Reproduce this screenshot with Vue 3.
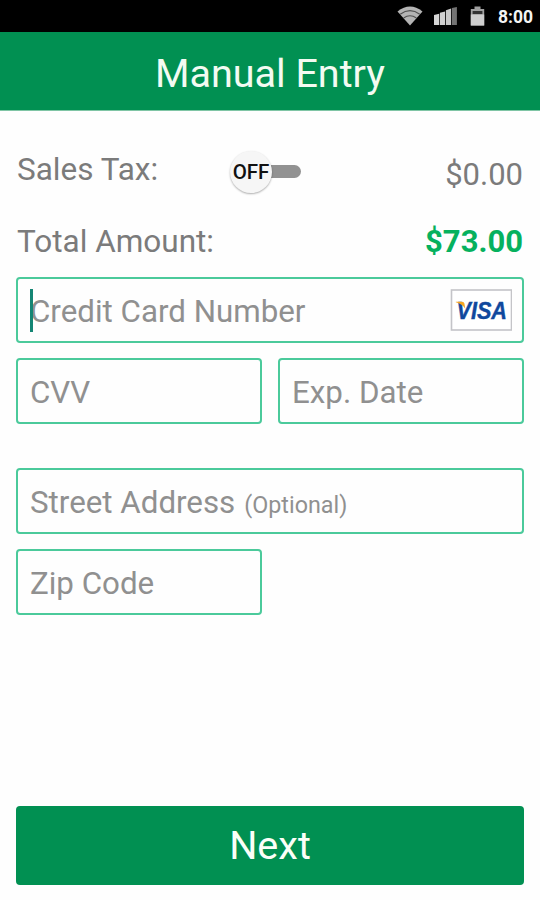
<script setup>
import { ref } from 'vue'

const time = '8:00'
const salesTax = ref('$0.00')
const total = ref('$73.00')
</script>

<template>
  <div class="screen">
    <div class="status">
      <svg class="wifi" width="26" height="20" viewBox="0 0 26 20">
        <path d="M0.5 5.5 Q13 -4.5 25.5 5.5 L13 19.5 Z" fill="#b4b4b4" />
        <path d="M3.2 8.2 Q13 1 22.8 8.2 M6.6 12 Q13 7.4 19.4 12" fill="none" stroke="#505050" stroke-width="1.1" />
      </svg>
      <svg class="signal" width="23" height="18" viewBox="0 0 23 18">
        <path d="M0 8l5.200-1.200V18H0z" fill="#d6d6d6" />
        <path d="M5.900 5.700l5.200-1.200V18H5.900z" fill="#d0d0d0" />
        <path d="M11.900 3.200l5.200-1.600V18h-5.200z" fill="#c8c8c8" />
        <path d="M17.900 1L22.900 0V18h-5z" fill="#737373" />
      </svg>
      <svg class="battery" width="15" height="20" viewBox="0 0 15 20">
        <path d="M4.500 0.500h6v2.500h3.700v16.500H0.800V3h3.700z" fill="#a0a0a0" />
        <rect x="2.6" y="5" width="9.800" height="3.200" fill="#333" />
        <rect x="0.800" y="8.500" width="13.400" height="11" fill="#cecece" />
      </svg>
      <span class="clock">{{ time }}</span>
    </div>

    <header class="title"><span>Manual Entry</span></header>

    <main class="form">
      <div class="row tax">
        <span class="label">Sales Tax:</span>
        <div class="switch">
          <div class="knob"><span>OFF</span></div>
          <div class="track"></div>
        </div>
        <span class="amount">{{ salesTax }}</span>
      </div>
      <div class="row total">
        <span class="label">Total Amount:</span>
        <span class="amount strong">{{ total }}</span>
      </div>

      <div class="field card">
        <span class="caret"></span>
        <span class="hint">Credit Card Number</span>
        <svg class="visa" width="62" height="42" viewBox="0 0 62 42">
          <rect x="1.5" y="1" width="60" height="40" fill="#fff" stroke="#c4c4c8" stroke-width="1.6" />
          <text x="6.500" y="29.500" textLength="50.500" lengthAdjust="spacingAndGlyphs" class="visa-text">VISA</text>
          <path d="M5.800 12.800h6.400q1.800 0 2.200 1.800l0.900 5.200q-3-5-9.500-6.500z" fill="#f5a623" />
        </svg>
      </div>
      <div class="pair">
        <div class="field"><span class="hint">CVV</span></div>
        <div class="field"><span class="hint">Exp. Date</span></div>
      </div>
      <div class="field street">
        <span class="hint">Street Address</span>
        <span class="optional">(Optional)</span>
      </div>
      <div class="pair">
        <div class="field"><span class="hint">Zip Code</span></div>
      </div>

      <button class="next" type="button"><span>Next</span></button>
    </main>
  </div>
</template>

<style>
body {
  margin: 0;
  background: #fefefe;
}
</style>

<style scoped>
.screen {
  width: 540px;
  height: 900px;
  box-sizing: border-box;
  display: flex;
  flex-direction: column;
  overflow: hidden;
  background: #fefefe;
  font-family: Roboto, "Liberation Sans", sans-serif;
  color: #7b7b7b;
  white-space: nowrap;
}
.status {
  height: 32px;
  flex: none;
  box-sizing: border-box;
  padding-right: 7px;
  display: flex;
  align-items: center;
  justify-content: flex-end;
  background: #000;
}
.wifi { margin-right: 11px; }
.signal { margin-right: 13px; }
.battery { margin-right: 13px; }
.clock {
  color: #f4f4f4;
  font-size: 17.5px;
  font-weight: 700;
  line-height: 32px;
  padding-top: 1px;
}
.title {
  height: 79px;
  flex: none;
  display: flex;
  align-items: center;
  justify-content: center;
  background: #019052;
  border-bottom: 1px solid #7fc5a5;
  box-sizing: border-box;
  color: #f3fbf2;
  font-size: 39.5px;
}
.title span { padding-top: 4px; }
.form {
  flex: 1;
  display: flex;
  flex-direction: column;
  padding: 29px 16px 15px;
}
.row {
  display: flex;
  align-items: center;
  justify-content: space-between;
  font-size: 31.5px;
  padding: 0 1px;
}
.tax {
  height: 64px;
  display: grid;
  grid-template-columns: 213px 1fr auto;
}
.amount { font-size: 31px; }
.tax .label { padding-bottom: 5px; }
.tax .amount { padding-top: 4px; }
.total { height: 73px; }
.total .label { padding-top: 1px; }
.strong {
  color: #06b15e;
  font-weight: 700;
  padding-top: 1px;
}
.switch {
  display: flex;
  align-items: center;
}
.knob {
  width: 42px;
  height: 42px;
  border-radius: 50%;
  display: flex;
  align-items: center;
  justify-content: center;
  background: #f6f6f6;
  box-shadow: 0 1px 2px rgba(0, 0, 0, 0.32);
  color: #111;
  font-size: 20.5px;
  font-weight: 500;
  z-index: 1;
}
.track {
  width: 30px;
  height: 13px;
  margin-left: -1px;
  margin-bottom: 2px;
  border-radius: 0 7px 7px 0;
  background: #929292;
}
.field {
  height: 66px;
  flex: none;
  box-sizing: border-box;
  border: 2px solid #4bca9b;
  border-radius: 4px;
  padding: 2px 10px 0 12px;
  display: flex;
  align-items: center;
  color: #909090;
}
.hint { font-size: 31.3px; }
.card { position: relative; }
.caret {
  position: absolute;
  left: 12px;
  top: 10px;
  width: 2.5px;
  height: 43px;
  background: #148574;
}
.visa {
  margin-left: auto;
  margin-top: -2px;
}
.visa-text {
  font-family: "Liberation Sans", sans-serif;
  font-size: 24px;
  font-weight: 700;
  font-style: italic;
  fill: #10489d;
  stroke: #10489d;
  stroke-width: 0.4;
}
.pair {
  display: grid;
  grid-template-columns: 246px 246px;
  gap: 16px;
  margin-top: 15px;
}
.street { margin-top: 44px; }
.optional {
  margin-left: 9px;
  font-size: 23.3px;
  padding-top: 5px;
}
.next {
  height: 79px;
  margin-top: auto;
  border: 0;
  border-radius: 4px;
  background: #019052;
  color: #fbfff8;
  font-family: inherit;
  font-size: 39.5px;
}
.next span {
  display: block;
  padding-bottom: 1px;
}
</style>
